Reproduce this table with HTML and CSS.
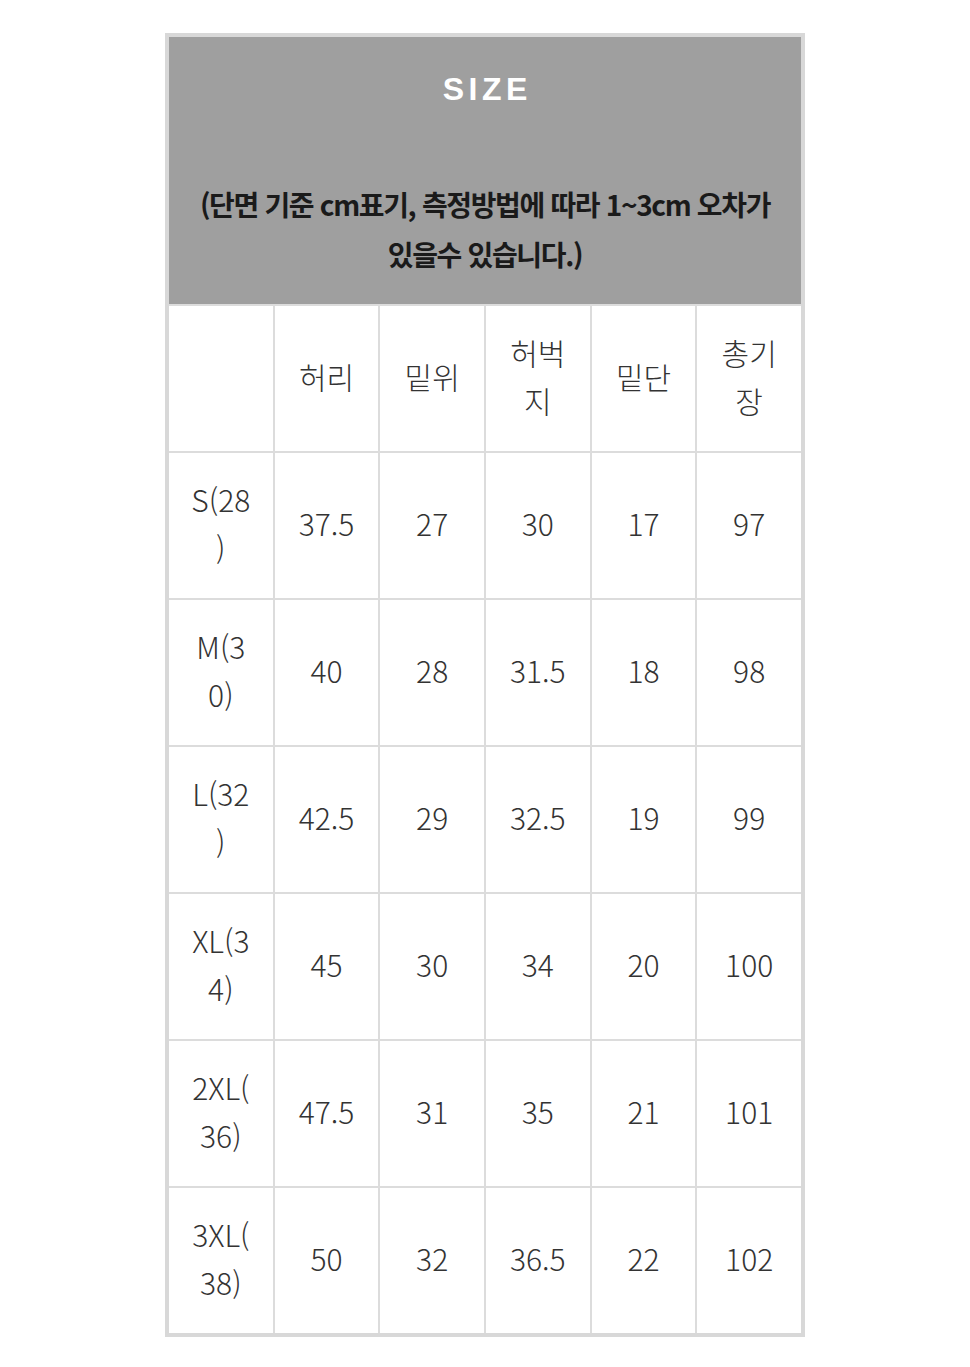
FILE: index.html
```html
<!DOCTYPE html>
<html lang="ko">
<head>
<meta charset="utf-8">
<title>SIZE</title>
<link rel="stylesheet" href="styles.css">
</head>
<body>
<div class="chart">
  <div class="head">
    <div class="title">SIZE</div>
    <div class="note">(단면 기준 cm표기, 측정방법에 따라 1~3cm 오차가 있을수 있습니다.)</div>
  </div>
  <div class="cell"></div>
  <div class="cell">허리</div>
  <div class="cell">밑위</div>
  <div class="cell">허벅지</div>
  <div class="cell">밑단</div>
  <div class="cell">총기장</div>

  <div class="cell">S(28)</div>
  <div class="cell">37.5</div>
  <div class="cell">27</div>
  <div class="cell">30</div>
  <div class="cell">17</div>
  <div class="cell">97</div>

  <div class="cell">M(30)</div>
  <div class="cell">40</div>
  <div class="cell">28</div>
  <div class="cell">31.5</div>
  <div class="cell">18</div>
  <div class="cell">98</div>

  <div class="cell">L(32)</div>
  <div class="cell">42.5</div>
  <div class="cell">29</div>
  <div class="cell">32.5</div>
  <div class="cell">19</div>
  <div class="cell">99</div>

  <div class="cell">XL(34)</div>
  <div class="cell">45</div>
  <div class="cell">30</div>
  <div class="cell">34</div>
  <div class="cell">20</div>
  <div class="cell">100</div>

  <div class="cell">2XL(36)</div>
  <div class="cell">47.5</div>
  <div class="cell">31</div>
  <div class="cell">35</div>
  <div class="cell">21</div>
  <div class="cell">101</div>

  <div class="cell">3XL(38)</div>
  <div class="cell">50</div>
  <div class="cell">32</div>
  <div class="cell">36.5</div>
  <div class="cell">22</div>
  <div class="cell">102</div>
</div>
</body>
</html>
```
FILE: styles.css
```css
html, body {
  margin: 0;
  padding: 0;
  background: #ffffff;
}
body {
  font-family: "Noto Sans CJK KR", "Noto Sans", sans-serif;
}
.chart {
  width: 640px;
  box-sizing: border-box;
  margin: 33px auto 0;
  border: 4px solid #d8d8d8;
  background: #dcdcdc;
  display: grid;
  grid-template-columns: repeat(6, 1fr);
  grid-template-rows: 267px;
  grid-auto-rows: 145px;
  gap: 2px;
}
.head {
  grid-column: 1 / -1;
  background: #9f9f9f;
  display: flex;
  flex-direction: column;
  align-items: center;
  padding: 32px 20px 0;
}
.title {
  font-family: "Liberation Sans", Arial, sans-serif;
  font-weight: 700;
  font-size: 32px;
  letter-spacing: 4.5px;
  padding-left: 4.5px;
  line-height: 40px;
  color: #ffffff;
}
.note {
  margin-top: 70px;
  width: 590px;
  text-align: center;
  font-weight: 700;
  font-size: 28px;
  line-height: 50px;
  letter-spacing: -1.35px;
  color: #1a1a1a;
}
.cell {
  background: #ffffff;
  display: flex;
  align-items: center;
  justify-content: center;
  text-align: center;
  padding: 0 21px 5px;
  font-size: 30px;
  font-weight: 300;
  line-height: 48px;
  color: #333333;
  word-break: break-all;
  line-break: anywhere;
}
```
